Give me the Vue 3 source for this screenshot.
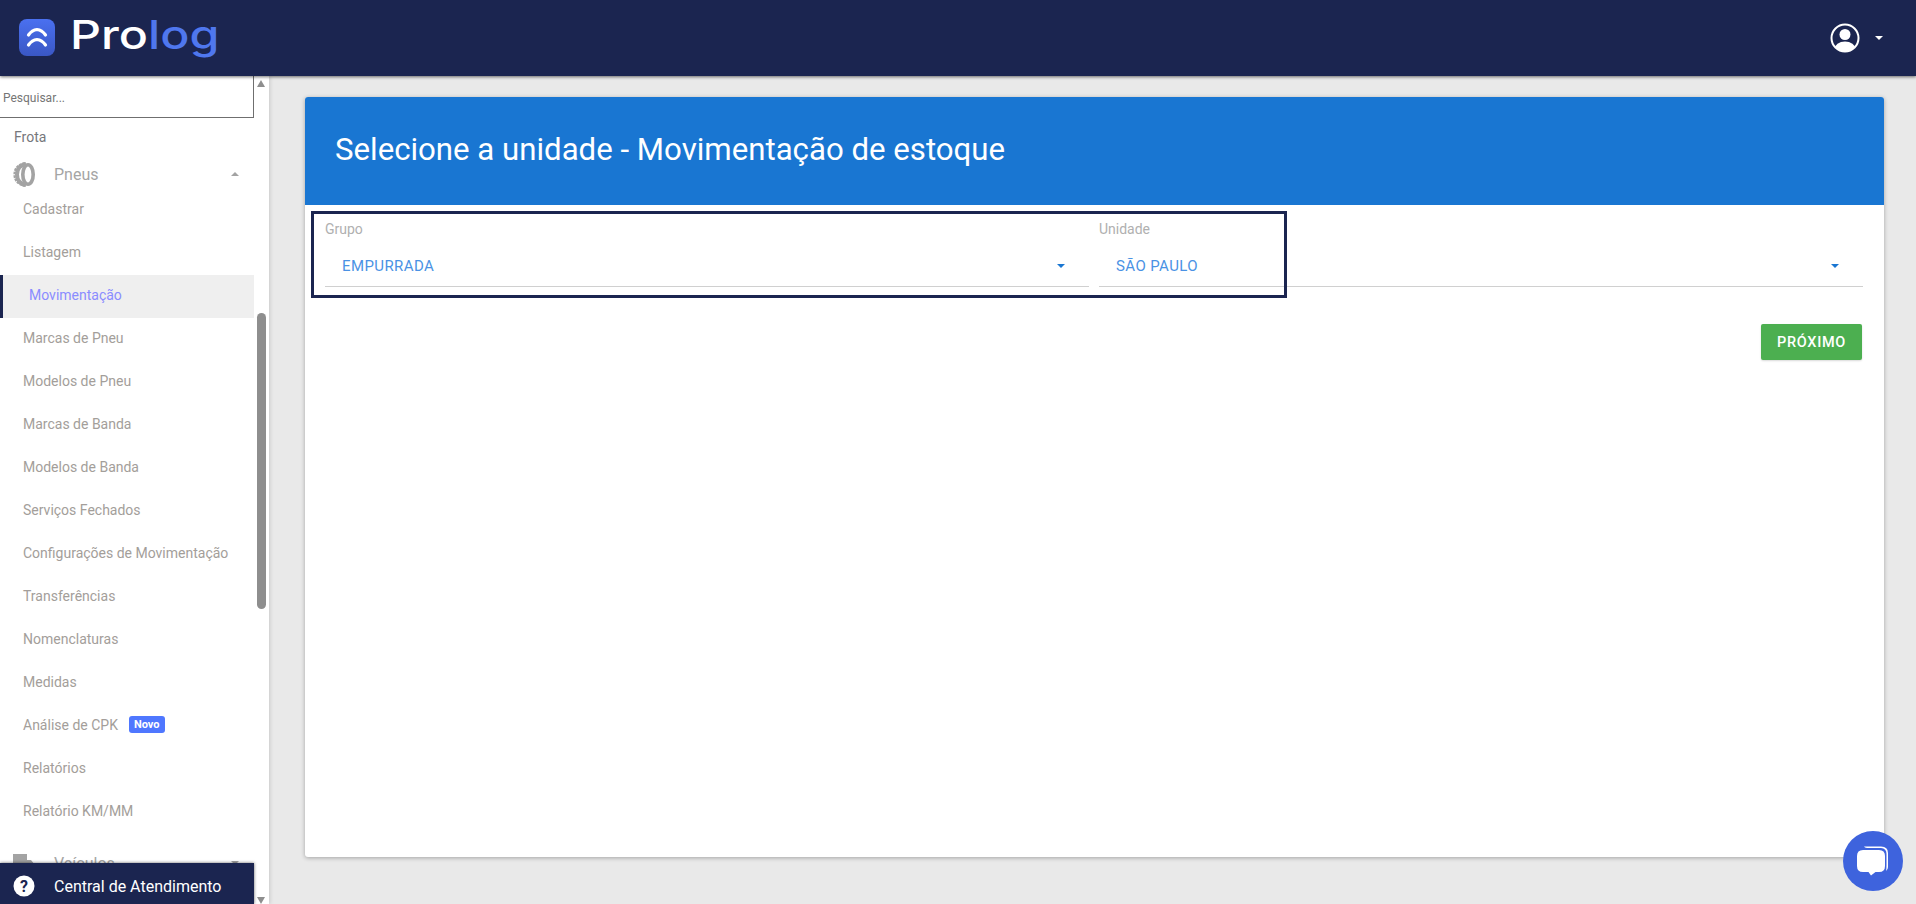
<script setup>
const items = [
  { label: 'Cadastrar' },
  { label: 'Listagem' },
  { label: 'Movimentação', active: true },
  { label: 'Marcas de Pneu' },
  { label: 'Modelos de Pneu' },
  { label: 'Marcas de Banda' },
  { label: 'Modelos de Banda' },
  { label: 'Serviços Fechados' },
  { label: 'Configurações de Movimentação' },
  { label: 'Transferências' },
  { label: 'Nomenclaturas' },
  { label: 'Medidas' },
  { label: 'Análise de CPK', badge: 'Novo' },
  { label: 'Relatórios' },
  { label: 'Relatório KM/MM' }
]
</script>

<template>
  <div class="app">
    <header class="topbar">
      <div class="brand">
        <svg class="brand-mark" width="36" height="37" viewBox="0 0 36 37">
          <defs>
            <linearGradient id="markfill" x1="0" y1="0" x2="0" y2="1">
              <stop offset="0" stop-color="#4a70f0" />
              <stop offset="1" stop-color="#3a57c4" />
            </linearGradient>
          </defs>
          <rect width="36" height="37" rx="8" fill="url(#markfill)" />
          <path d="M9.5 16 Q13 11 18 10.5 Q23 11 26.5 16" fill="none" stroke="#fff" stroke-width="3.2" stroke-linecap="round" />
          <path d="M9.5 26 Q13 21 18 20.5 Q23 21 26.5 26" fill="none" stroke="#fff" stroke-width="3.2" stroke-linecap="round" />
        </svg>
        <span class="wordmark">Pro<span class="wordmark-accent">log</span></span>
      </div>
      <div class="account">
        <svg width="30" height="30" viewBox="0 0 30 30">
          <defs>
            <clipPath id="usercircle"><circle cx="15" cy="15" r="13.5" /></clipPath>
          </defs>
          <circle cx="15" cy="15" r="13.5" fill="none" stroke="#fff" stroke-width="2" />
          <circle cx="15" cy="11.5" r="5.5" fill="#fff" />
          <ellipse cx="15" cy="26" rx="10.5" ry="7.5" fill="#fff" clip-path="url(#usercircle)" />
        </svg>
        <span class="caret caret-white"></span>
      </div>
    </header>

    <div class="body">
      <aside class="sidebar">
        <div class="side-scroll">
          <div class="search">Pesquisar...</div>
          <div class="side-title">Frota</div>
          <div class="group">
            <svg class="group-icon" width="22" height="25" viewBox="0 0 22 25">
              <path d="M13 2 Q4 3.5 4 12.5 Q4 21.5 13 23" fill="none" stroke="#a3a3a3" stroke-width="4" />
              <path d="M12 1.2 Q1.6 3.5 1.6 12.5 Q1.6 21.5 12 23.8" fill="none" stroke="#a3a3a3" stroke-width="2.4" stroke-dasharray="2.6 0.9" />
              <ellipse cx="15" cy="12.5" rx="5.2" ry="9.8" fill="#fff" stroke="#a3a3a3" stroke-width="3.6" />
            </svg>
            <span class="group-label">Pneus</span>
            <span class="caret caret-up"></span>
          </div>
          <ul class="menu">
            <li v-for="item in items" :key="item.label" class="menu-item" :class="{ active: item.active }">
              <span>{{ item.label }}</span>
              <span v-if="item.badge" class="badge">{{ item.badge }}</span>
            </li>
          </ul>
          <div class="group group-next">
            <svg class="group-icon" width="22" height="25" viewBox="0 0 22 25">
              <path d="M0 3h14v6h4l4 5v6H0z" fill="#a3a3a3" />
            </svg>
            <span class="group-label">Veículos</span>
            <span class="caret caret-gray"></span>
          </div>
        </div>
        <div class="scrollbar">
          <span class="arrow arrow-up"></span>
          <span class="thumb"></span>
          <span class="arrow arrow-down"></span>
        </div>
        <div class="help">
          <svg width="22" height="22" viewBox="0 0 22 22">
            <circle cx="11" cy="11" r="10.5" fill="#fff" />
            <text x="11" y="16.5" text-anchor="middle" class="help-mark">?</text>
          </svg>
          <span>Central de Atendimento</span>
        </div>
      </aside>

      <main class="content">
        <section class="card">
          <div class="card-head">
            <h1>Selecione a unidade - Movimentação de estoque</h1>
          </div>
          <div class="card-body">
            <div class="fields">
              <div class="field">
                <label>Grupo</label>
                <div class="select">
                  <span>EMPURRADA</span>
                  <span class="caret caret-blue"></span>
                </div>
              </div>
              <div class="field">
                <label>Unidade</label>
                <div class="select">
                  <span>SÃO PAULO</span>
                  <span class="caret caret-blue"></span>
                </div>
              </div>
            </div>
            <div class="actions">
              <button class="next" type="button">PRÓXIMO</button>
            </div>
            <div class="highlight"></div>
          </div>
        </section>
      </main>
    </div>

    <button class="chat" type="button" aria-label="Chat">
      <svg width="34" height="32" viewBox="0 0 34 32">
        <path d="M8 1.5 H25 Q32 1.5 32 8 V22 Q32 24.5 30 26 Q30.5 24 30.5 20 V9 Q30.5 3.5 25 3 H11 Q8.5 2.8 8 1.5 Z" fill="#fff" />
        <path d="M7 5 H23 Q29 5 29 11 V21 Q29 27 23 27 H19.5 L15 30.5 L12.5 27 H7 Q1 27 1 21 V11 Q1 5 7 5 Z" fill="#fff" />
      </svg>
    </button>
  </div>
</template>

<style>
html, body { margin: 0; padding: 0; }
</style>

<style scoped>
.app {
  width: 1916px;
  height: 904px;
  overflow: hidden;
  display: flex;
  flex-direction: column;
  background: #e9e9e9;
  font-family: Roboto, "Liberation Sans", sans-serif;
  position: relative;
}
.topbar {
  height: 76px;
  flex: none;
  background: #1b2550;
  display: flex;
  align-items: center;
  justify-content: space-between;
  padding: 0 20px 0 19px;
  box-shadow: 0 1px 3px rgba(0, 0, 0, 0.55);
  position: relative;
  z-index: 3;
}
.brand {
  display: flex;
  align-items: center;
  gap: 17px;
  height: 76px;
}
.brand-mark { margin-top: -1px; }
.wordmark {
  font-family: Inter, sans-serif;
  font-size: 39px;
  font-weight: 500;
  color: #fff;
  line-height: 1;
  margin-top: -7px;
  margin-left: -2px;
  transform: scaleX(1.24);
  transform-origin: left center;
}
.wordmark-accent { color: #4f77ee; }
.account {
  display: flex;
  align-items: center;
  gap: 15px;
  margin-right: 13px;
}
.caret {
  display: inline-block;
  width: 0;
  height: 0;
  border-left: 4px solid transparent;
  border-right: 4px solid transparent;
}
.caret-white { border-top: 4px solid #fff; }
.caret-blue { border-top: 4px solid #1976d2; }
.caret-gray { border-top: 4px solid #a3a3a3; }
.caret-up { border-bottom: 4px solid #a3a3a3; }
.body {
  flex: 1;
  display: flex;
  min-height: 0;
}
.sidebar {
  width: 269px;
  flex: none;
  background: #fff;
  position: relative;
  overflow: hidden;
  box-shadow: 1px 0 4px rgba(0, 0, 0, 0.14);
  z-index: 1;
}
.side-scroll {
  width: 254px;
  height: 100%;
  overflow: hidden;
}
.search {
  height: 42px;
  box-sizing: border-box;
  border: 1px solid #6f6f6f;
  border-left: none;
  border-top: none;
  padding: 15px 0 0 3px;
  font-size: 12px;
  line-height: 14px;
  color: #757575;
}
.side-title {
  padding: 11px 0 0 14px;
  font-size: 14px;
  line-height: 17px;
  color: #76777c;
}
.group {
  height: 36px;
  display: flex;
  align-items: center;
  margin-top: 10px;
  padding: 0 15px 0 13px;
}
.group-icon { flex: none; }
.group-label {
  flex: 1;
  margin-left: 19px;
  font-size: 16px;
  color: #a5a5a5;
}
.menu {
  list-style: none;
  margin: -3px 0 0;
  padding: 0;
}
.menu-item {
  height: 43px;
  box-sizing: border-box;
  display: flex;
  align-items: center;
  padding: 0 0 4px 23px;
  font-size: 14px;
  color: #a39e9a;
}
.menu-item.active {
  padding-left: 26px;
  border-left: 3px solid #1b2550;
  background: #efefef;
  color: #8a8cff;
}
.badge {
  margin-left: 11px;
  height: 17px;
  padding: 0 5px;
  border-radius: 3px;
  background: #4f77ff;
  color: #fff;
  font-size: 11px;
  font-weight: 700;
  line-height: 17px;
}
.group-next { margin-top: 11px; }
.scrollbar {
  position: absolute;
  right: 0;
  top: 0;
  bottom: 0;
  width: 15px;
  background: #fff;
}
.thumb {
  position: absolute;
  left: 3px;
  top: 237px;
  width: 9px;
  height: 296px;
  border-radius: 5px;
  background: #8e8e8e;
}
.arrow {
  position: absolute;
  left: 3px;
  width: 0;
  height: 0;
  border-left: 4.5px solid transparent;
  border-right: 4.5px solid transparent;
}
.arrow-up { top: 4px; border-bottom: 7px solid #8e8e8e; }
.arrow-down { bottom: 0; border-top: 7px solid #8e8e8e; }
.help {
  position: absolute;
  left: 0;
  bottom: 0;
  width: 254px;
  height: 41px;
  box-sizing: border-box;
  display: flex;
  align-items: center;
  gap: 19px;
  padding: 5px 0 0 13px;
  background: #1b2550;
  color: #fff;
  font-size: 16px;
  box-shadow: 0 0 3px rgba(0, 0, 0, 0.6);
}
.help-mark {
  font-family: Roboto, sans-serif;
  font-size: 16px;
  font-weight: 700;
  fill: #1b2550;
}
.content {
  flex: 1;
  min-width: 0;
  padding: 21px 32px 47px 36px;
  display: flex;
}
.card {
  flex: 1;
  display: flex;
  flex-direction: column;
  background: #fff;
  border-radius: 3px;
  box-shadow: 0 1px 4px rgba(0, 0, 0, 0.3);
  overflow: hidden;
}
.card-head {
  height: 108px;
  flex: none;
  background: #1976d2;
  display: flex;
  align-items: center;
  padding: 0 0 3px 30px;
  box-sizing: border-box;
}
.card-head h1 {
  margin: 0;
  font-size: 31.2px;
  font-weight: 400;
  color: #fff;
}
.card-body {
  flex: 1;
  position: relative;
  padding: 0 21px 0 20px;
}
.fields {
  display: flex;
  gap: 10px;
  padding-top: 15px;
}
.field {
  flex: 1;
  min-width: 0;
}
.field label {
  display: block;
  font-size: 14px;
  line-height: 18px;
  color: #b0b0b0;
}
.select {
  height: 49px;
  box-sizing: border-box;
  display: flex;
  align-items: center;
  justify-content: space-between;
  padding: 8px 24px 0 17px;
  border-bottom: 1px solid #d0d0d0;
  font-size: 15px;
  letter-spacing: 0.4px;
  color: #4a92e4;
}
.actions {
  display: flex;
  justify-content: flex-end;
  padding: 37px 1px 0 0;
}
.next {
  width: 101px;
  height: 36px;
  border: none;
  border-radius: 2px;
  background: #4caf50;
  color: #fff;
  font-family: Roboto, sans-serif;
  font-size: 14.5px;
  font-weight: 500;
  letter-spacing: 0.7px;
  box-shadow: 0 1px 2px rgba(0, 0, 0, 0.15);
  padding: 0;
}
.highlight {
  position: absolute;
  left: 6px;
  top: 6px;
  width: 976px;
  height: 87px;
  box-sizing: border-box;
  border: 3px solid #1b2550;
  pointer-events: none;
}
.chat {
  position: absolute;
  left: 1843px;
  top: 831px;
  width: 60px;
  height: 60px;
  border: none;
  padding: 0;
  border-radius: 50%;
  background: #3e63dd;
  display: flex;
  align-items: center;
  justify-content: center;
  z-index: 4;
}
</style>
